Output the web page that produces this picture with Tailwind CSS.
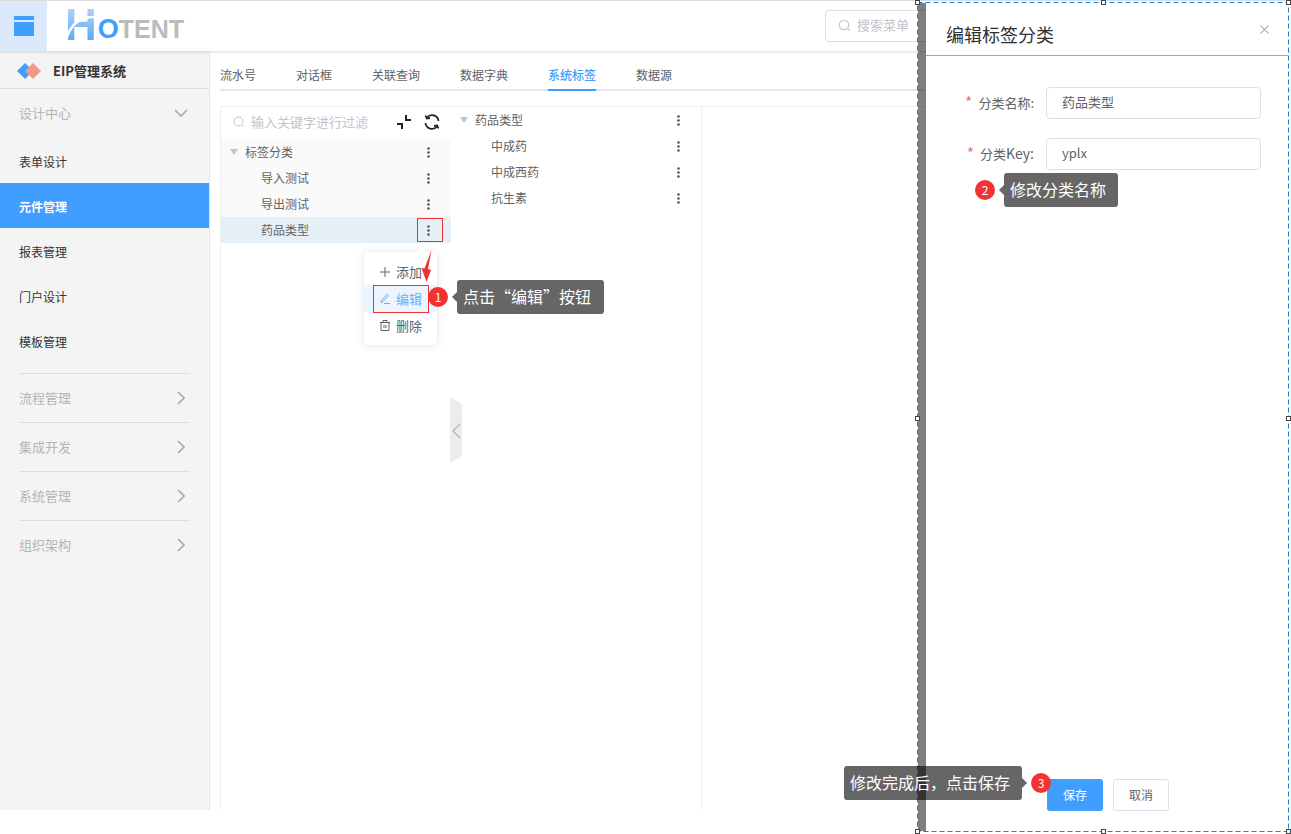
<!DOCTYPE html>
<html lang="zh">
<head>
<meta charset="utf-8">
<script src="https://cdn.jsdelivr.net/npm/@tailwindcss/browser@4"></script>
<title>EIP</title>
</head>
<body class="bg-white">
<div class="relative w-[1291px] h-[834px] overflow-hidden bg-white text-[#606266] text-xs font-['Noto_Sans_CJK_SC','Liberation_Sans',sans-serif]">

  <!-- header -->
  <header class="relative z-10 flex h-[51px] items-stretch border-t border-[#dcdcdc] bg-white shadow-[0_1px_3px_rgba(0,0,0,0.15)]">
    <div class="flex w-[47px] items-center justify-center bg-[#dce8fb]">
      <svg width="20" height="20" viewBox="0 0 20 20"><rect x="0" y="0" width="20" height="4" fill="#409eff"/><rect x="0" y="6" width="20" height="14" rx="1" fill="#409eff"/></svg>
    </div>
    <div class="relative ml-[18px] flex w-[122px] items-start font-['Liberation_Sans',sans-serif] font-bold leading-none">
      <span class="mt-[4px] text-[44px] leading-[40px] bg-gradient-to-b from-[#b5d6f5] to-[#4ea3f5] bg-clip-text text-transparent">H</span>
      <span class="mt-[17px] ml-[1px] text-[27px] leading-[22px] text-[#409eff]">O</span>
      <span class="mt-[17px] text-[25px] leading-[22px] text-[#bbbbbb]">TENT</span>
      <svg class="absolute left-0 top-[4px]" width="34" height="36" viewBox="0 0 34 36" fill="none"><path d="M1 35C5 20 14 11 32 12" stroke="white" stroke-width="2.5"/></svg>
    </div>
    <div class="ml-[638px] mt-[9px] flex h-[32px] w-[110px] items-center gap-[6px] rounded border border-[#dcdfe6] pb-[3px] pl-3 text-[13px] text-[#c0c4cc]">
      <svg class="mt-[2px]" width="13" height="13" viewBox="0 0 13 13" fill="none" stroke="#c0c4cc" stroke-width="1.1"><circle cx="6" cy="6" r="4.8"/><path d="M9.5 9.5L11.5 11.5"/></svg>
      <span>搜索菜单</span>
    </div>
  </header>

  <div class="flex h-[759px]">
    <!-- sidebar -->
    <aside class="w-[210px] shrink-0 border-r border-[#e6e6e6] bg-[#f4f4f4]">
      <div class="flex h-[38px] items-center border-b border-[#dedede] pl-[17px] pt-[3px]">
        <svg width="25" height="18" viewBox="0 0 25 18"><path d="M8 1L16 9L8 17L0 9Z" fill="#409eff"/><path d="M16 1L24 9L16 17L8 9Z" fill="#ec9a8c"/></svg>
        <span class="ml-[11px] text-[13px] font-bold text-[#333]">EIP管理系统</span>
      </div>
      <div class="flex h-[49px] items-center justify-between pb-[2px] pl-[19px] pr-[21px] text-[13px] text-[#b4b4b4]">
        <span>设计中心</span>
        <svg width="14" height="8" viewBox="0 0 14 8" fill="none" stroke="#a8a8a8" stroke-width="1.6"><path d="M1 1L7 7L13 1"/></svg>
      </div>
      <nav class="text-[#333]">
        <div class="flex h-[45px] items-center pl-[19px] pt-[2px]">表单设计</div>
        <div class="flex h-[45px] items-center bg-[#409eff] pl-[19px] pt-[2px] font-bold text-white">元件管理</div>
        <div class="flex h-[45px] items-center pl-[19px] pt-[2px]">报表管理</div>
        <div class="flex h-[45px] items-center pl-[19px] pt-[2px]">门户设计</div>
        <div class="flex h-[45px] items-center pl-[19px] pt-[2px]">模板管理</div>
      </nav>
      <div class="mx-[19px] mt-[10px] text-[13px] text-[#b4b4b4]">
        <div class="flex h-[49px] items-center justify-between border-t border-[#dedede] pr-[5px]"><span>流程管理</span><svg width="8" height="14" viewBox="0 0 8 14" fill="none" stroke="#a8a8a8" stroke-width="1.6"><path d="M1 1L7 7L1 13"/></svg></div>
        <div class="flex h-[49px] items-center justify-between border-t border-[#dedede] pr-[5px]"><span>集成开发</span><svg width="8" height="14" viewBox="0 0 8 14" fill="none" stroke="#a8a8a8" stroke-width="1.6"><path d="M1 1L7 7L1 13"/></svg></div>
        <div class="flex h-[49px] items-center justify-between border-t border-[#dedede] pr-[5px]"><span>系统管理</span><svg width="8" height="14" viewBox="0 0 8 14" fill="none" stroke="#a8a8a8" stroke-width="1.6"><path d="M1 1L7 7L1 13"/></svg></div>
        <div class="flex h-[49px] items-center justify-between border-t border-[#dedede] pr-[5px]"><span>组织架构</span><svg width="8" height="14" viewBox="0 0 8 14" fill="none" stroke="#a8a8a8" stroke-width="1.6"><path d="M1 1L7 7L1 13"/></svg></div>
      </div>
    </aside>

    <!-- content -->
    <main class="flex min-w-0 flex-1 flex-col pl-[10px]">
      <div class="flex h-[40px] items-end border-b-2 border-[#e4e7ed] text-[#606266]">
        <span class="mr-[40px] -mb-[2px] h-[31px] pt-[7px]">流水号</span>
        <span class="mr-[40px] -mb-[2px] h-[31px] pt-[7px]">对话框</span>
        <span class="mr-[40px] -mb-[2px] h-[31px] pt-[7px]">关联查询</span>
        <span class="mr-[40px] -mb-[2px] h-[31px] pt-[7px]">数据字典</span>
        <span class="mr-[40px] -mb-[2px] h-[31px] border-b-2 border-[#409eff] pt-[7px] font-medium text-[#409eff]">系统标签</span>
        <span class="-mb-[2px] h-[31px] pt-[7px]">数据源</span>
      </div>
      <div class="mt-[15px] flex flex-1 border-l border-t border-[#ebeef5]">
        <!-- left tree -->
        <section class="w-[230px] shrink-0">
          <div class="flex h-[32px] items-center pb-[2px] pl-[12px] text-[13px] text-[#c0c4cc]">
            <svg width="12" height="12" viewBox="0 0 12 12" fill="none" stroke="#c0c4cc" stroke-width="1"><circle cx="5.5" cy="5.5" r="4.5"/><path d="M9 9L11 11"/></svg>
            <span class="ml-[6px]">输入关键字进行过滤</span>
            <svg class="ml-[28px]" width="16" height="16" viewBox="0 0 16 16" fill="none" stroke="#222" stroke-width="2"><path d="M1 10H6V15"/><path d="M10 1V6H15"/></svg>
            <svg class="ml-[12px]" width="16" height="16" viewBox="0 0 16 16" fill="none" stroke="#222" stroke-width="1.8"><path d="M14.5 7A6.5 6.5 0 0 0 3 3.5"/><path d="M1.5 9A6.5 6.5 0 0 0 13 12.5"/><path d="M1.5 1.5L2.8 4.6L6 4" /><path d="M14.5 14.5L13.2 11.4L10 12"/></svg>
          </div>
          <div class="flex h-[26px] items-center justify-between bg-[#fafafa] pl-[9px] pr-[21px]">
            <span class="flex items-center"><svg width="8" height="6" viewBox="0 0 8 6"><path d="M0 0H8L4 6Z" fill="#c0c4cc"/></svg><span class="ml-[7px]">标签分类</span></span>
            <svg width="3" height="11" viewBox="0 0 3 11" fill="#5b5350"><circle cx="1.5" cy="1.5" r="1.3"/><circle cx="1.5" cy="5.5" r="1.3"/><circle cx="1.5" cy="9.5" r="1.3"/></svg>
          </div>
          <div class="flex h-[26px] items-center justify-between bg-[#fafafa] pl-[40px] pr-[21px]"><span>导入测试</span><svg width="3" height="11" viewBox="0 0 3 11" fill="#5b5350"><circle cx="1.5" cy="1.5" r="1.3"/><circle cx="1.5" cy="5.5" r="1.3"/><circle cx="1.5" cy="9.5" r="1.3"/></svg></div>
          <div class="flex h-[26px] items-center justify-between bg-[#fafafa] pl-[40px] pr-[21px]"><span>导出测试</span><svg width="3" height="11" viewBox="0 0 3 11" fill="#5b5350"><circle cx="1.5" cy="1.5" r="1.3"/><circle cx="1.5" cy="5.5" r="1.3"/><circle cx="1.5" cy="9.5" r="1.3"/></svg></div>
          <div class="flex h-[26px] items-center justify-between bg-[#e6eef6] pl-[40px] pr-[21px]"><span>药品类型</span><svg width="3" height="11" viewBox="0 0 3 11" fill="#5b5350"><circle cx="1.5" cy="1.5" r="1.3"/><circle cx="1.5" cy="5.5" r="1.3"/><circle cx="1.5" cy="9.5" r="1.3"/></svg></div>
        </section>
        <!-- second tree -->
        <section class="w-[251px] shrink-0 border-r border-[#ebeef5]">
          <div class="flex h-[26px] items-center justify-between pl-[9px] pr-[21px]">
            <span class="flex items-center"><svg width="8" height="6" viewBox="0 0 8 6"><path d="M0 0H8L4 6Z" fill="#c0c4cc"/></svg><span class="ml-[7px]">药品类型</span></span>
            <svg width="3" height="11" viewBox="0 0 3 11" fill="#5b5350"><circle cx="1.5" cy="1.5" r="1.3"/><circle cx="1.5" cy="5.5" r="1.3"/><circle cx="1.5" cy="9.5" r="1.3"/></svg>
          </div>
          <div class="flex h-[26px] items-center justify-between pl-[40px] pr-[21px]"><span>中成药</span><svg width="3" height="11" viewBox="0 0 3 11" fill="#5b5350"><circle cx="1.5" cy="1.5" r="1.3"/><circle cx="1.5" cy="5.5" r="1.3"/><circle cx="1.5" cy="9.5" r="1.3"/></svg></div>
          <div class="flex h-[26px] items-center justify-between pl-[40px] pr-[21px]"><span>中成西药</span><svg width="3" height="11" viewBox="0 0 3 11" fill="#5b5350"><circle cx="1.5" cy="1.5" r="1.3"/><circle cx="1.5" cy="5.5" r="1.3"/><circle cx="1.5" cy="9.5" r="1.3"/></svg></div>
          <div class="flex h-[26px] items-center justify-between pl-[40px] pr-[21px]"><span>抗生素</span><svg width="3" height="11" viewBox="0 0 3 11" fill="#5b5350"><circle cx="1.5" cy="1.5" r="1.3"/><circle cx="1.5" cy="5.5" r="1.3"/><circle cx="1.5" cy="9.5" r="1.3"/></svg></div>
        </section>
      </div>
    </main>
  </div>

  <!-- collapse handle -->
  <svg class="absolute left-[450px] top-[397px]" width="12" height="66" viewBox="0 0 12 66"><path d="M0 0L12 7V59L0 66Z" fill="#ececec"/><path d="M10 27L3 34L10 41" fill="none" stroke="#b0b0b0" stroke-width="1.2"/></svg>

  <!-- context menu -->
  <div class="absolute left-[364px] top-[252px] z-20 flex h-[93px] w-[73px] flex-col justify-center rounded bg-white text-[13px] shadow-[0_0_8px_rgba(0,0,0,0.12)] before:absolute before:left-[55px] before:-top-[3px] before:size-[7px] before:rotate-45 before:bg-white before:content-['']">
    <div class="flex h-[27px] items-center pl-[16px]"><svg width="10" height="10" viewBox="0 0 10 10" stroke="#606266" stroke-width="1" fill="none"><path d="M5 0V10M0 5H10"/></svg><span class="ml-[6px]">添加</span></div>
    <div class="flex h-[27px] items-center bg-[#ecf5ff] pl-[16px] text-[#66b1ff]"><svg width="10" height="11" viewBox="0 0 10 11" stroke="#66b1ff" stroke-width="1" fill="none"><path d="M1 8L7 1L8.5 2.5L2.5 9L1 9.5Z"/><path d="M4 10.5H10"/></svg><span class="ml-[6px]">编辑</span></div>
    <div class="flex h-[27px] items-center pl-[16px]"><svg width="10" height="11" viewBox="0 0 10 11" stroke="#606266" stroke-width="1" fill="none"><path d="M0 2.5H10M3 2.5V0.5H7V2.5M1 2.5V10.5H9V2.5M4 5V8M6 5V8"/></svg><span class="ml-[6px]">删除</span></div>
  </div>

  <!-- red marks -->
  <div class="absolute left-[417px] top-[218px] z-30 h-[24px] w-[26px] border border-[#ee3333]"></div>
  <div class="absolute left-[373px] top-[285px] z-30 h-[28px] w-[56px] border border-[#ee3333]"></div>
  <svg class="absolute left-[420px] top-[248px] z-30" width="14" height="36" viewBox="0 0 14 36"><path d="M11.5 2L8 21L11 22L6.5 34L1.5 20L4.5 20.5L11.5 2Z" fill="#ee3333"/></svg>

  <!-- drawer -->
  <div class="absolute left-[918px] top-[3px] z-30 flex h-[828px] w-[370px]">
    <div class="w-[8px] shrink-0 bg-black/50"></div>
    <div class="flex flex-1 flex-col bg-white">
      <div class="flex h-[53px] items-center justify-between border-b border-[#a6a6a6] pl-5 pr-[19px] text-[18px] text-[#303133]">
        <span class="mt-[10px]">编辑标签分类</span>
        <svg width="9" height="9" viewBox="0 0 9 9" stroke="#b0b4bc" stroke-width="1.1"><path d="M0.5 0.5L8.5 8.5M8.5 0.5L0.5 8.5"/></svg>
      </div>
      <div class="flex flex-col gap-[19px] pt-[31px] text-[13px]">
        <div class="flex h-[32px] items-center">
          <label class="w-[108px] pb-[2px] text-right"><span class="mr-[6px] text-[15px] text-[#f56c6c]">*</span>分类名称:</label>
          <div class="ml-[12px] flex h-[32px] w-[215px] items-center rounded border border-[#dcdfe6] pb-[2px] pl-[15px]">药品类型</div>
        </div>
        <div class="flex h-[32px] items-center">
          <label class="w-[108px] pb-[3px] text-right"><span class="mr-[6px] text-[15px] text-[#f56c6c]">*</span>分类<span class="text-[14px]">Key:</span></label>
          <div class="ml-[12px] flex h-[32px] w-[215px] items-center rounded border border-[#dcdfe6] pb-[2px] pl-[15px]">yplx</div>
        </div>
      </div>
      <div class="mt-auto mb-[20px] flex gap-[10px] pl-[121px]">
        <button class="h-[32px] w-[56px] rounded-[3px] bg-[#409eff] text-xs text-white">保存</button>
        <button class="h-[32px] w-[56px] rounded-[3px] border border-[#dcdfe6] bg-white text-xs text-[#606266]">取消</button>
      </div>
    </div>
  </div>

  <!-- selection frame -->
  <svg class="pointer-events-none absolute left-[917px] top-[2px] z-40" width="372" height="830" fill="none"><rect x="0.5" y="0.5" width="371" height="829" stroke="#1584e0" stroke-dasharray="5 3"/></svg>
  <div class="absolute left-[915px] top-0 z-40 size-[5px] border border-[#444] bg-white"></div>
  <div class="absolute left-[1101px] top-0 z-40 size-[5px] border border-[#444] bg-white"></div>
  <div class="absolute left-[1286px] top-0 z-40 size-[5px] border border-[#444] bg-white"></div>
  <div class="absolute left-[915px] top-[416px] z-40 size-[5px] border border-[#444] bg-white"></div>
  <div class="absolute left-[1286px] top-[416px] z-40 size-[5px] border border-[#444] bg-white"></div>
  <div class="absolute left-[915px] top-[829px] z-40 size-[5px] border border-[#444] bg-white"></div>
  <div class="absolute left-[1101px] top-[829px] z-40 size-[5px] border border-[#444] bg-white"></div>
  <div class="absolute left-[1286px] top-[829px] z-40 size-[5px] border border-[#444] bg-white"></div>

  <!-- annotation 1 -->
  <div class="absolute left-[428px] top-[287px] z-50 flex size-[20px] items-center justify-center rounded-full bg-[#f33333] text-xs text-white">1</div>
  <div class="absolute left-[457px] top-[280px] z-50 flex h-[34px] w-[147px] items-center rounded-[3px] bg-black/60 pl-[6px] text-[16px] text-white before:absolute before:-left-[5px] before:top-[12px] before:border-y-[5px] before:border-r-[5px] before:border-y-transparent before:border-r-[#666] before:content-['']">点击“编辑”按钮</div>

  <!-- annotation 2 -->
  <div class="absolute left-[975px] top-[180px] z-50 flex size-[20px] items-center justify-center rounded-full bg-[#f33333] text-xs text-white">2</div>
  <div class="absolute left-[1004px] top-[173px] z-50 flex h-[34px] w-[114px] items-center rounded-[3px] bg-black/60 pl-[6px] text-[16px] text-white before:absolute before:-left-[5px] before:top-[12px] before:border-y-[5px] before:border-r-[5px] before:border-y-transparent before:border-r-[#666] before:content-['']">修改分类名称</div>

  <!-- annotation 3 -->
  <div class="absolute left-[1031px] top-[773px] z-50 flex size-[20px] items-center justify-center rounded-full bg-[#f33333] text-xs text-white">3</div>
  <div class="absolute left-[844px] top-[766px] z-50 flex h-[34px] w-[178px] items-center rounded-[3px] bg-black/60 pl-[6px] text-[16px] text-white after:absolute after:-right-[5px] after:top-[12px] after:border-y-[5px] after:border-l-[5px] after:border-y-transparent after:border-l-[#666] after:content-['']">修改完成后，点击保存</div>

</div>
</body>
</html>
